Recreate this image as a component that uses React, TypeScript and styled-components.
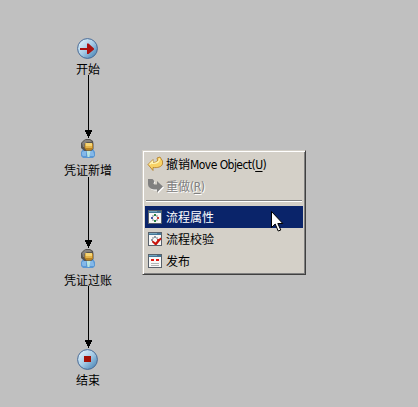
import React from "react";
import styled, { createGlobalStyle } from "styled-components";

const GlobalStyle = createGlobalStyle`
  html, body { margin: 0; background: #c0c0c0; overflow: hidden; }
`;

const Canvas = styled.main`
  position: relative;
  width: 418px;
  height: 407px;
  overflow: hidden;
  background: #c0c0c0;
  color: #000;
  font: 12px/16px "Noto Sans CJK SC", sans-serif;
  cursor: default;
`;

const Node = styled.div<{ $y: number }>`
  position: absolute;
  left: 48px;
  top: ${(p) => p.$y}px;
  width: 80px;
  display: flex;
  flex-direction: column;
  align-items: center;
  svg { display: block; }
`;

const NodeLabel = styled.span<{ $gap: number }>`
  height: 16px;
  margin-top: ${(p) => p.$gap}px;
  white-space: nowrap;
`;

const Edge = styled.svg<{ $y: number }>`
  position: absolute;
  left: 84px;
  top: ${(p) => p.$y}px;
`;

const Menu = styled.div`
  position: absolute;
  left: 142px;
  top: 150px;
  width: 164px;
  height: 125px;
  box-sizing: border-box;
  padding: 1px;
  border: 1px solid;
  border-color: #d4d0c8 #404040 #404040 #d4d0c8;
  background: #d4d0c8;
  box-shadow: inset 1px 1px #fff, inset -1px -1px #808080;
`;

const MenuItems = styled.div`
  padding: 1px;
`;

const Item = styled.div<{ $state?: "active" | "disabled" }>`
  display: flex;
  align-items: center;
  height: 22px;
  padding-left: 2px;
  white-space: nowrap;
  background: ${(p) => (p.$state === "active" ? "#0a246a" : "transparent")};
  color: ${(p) => (p.$state === "active" ? "#fff" : p.$state === "disabled" ? "#808080" : "#000")};
  text-shadow: ${(p) => (p.$state === "disabled" ? "1px 1px #fff" : "none")};
  svg { flex: none; margin-right: 3px; overflow: visible; }
`;

const Latin = styled.span`
  font-family: "DejaVu Sans Condensed", "DejaVu Sans", sans-serif;
  font-stretch: condensed;
  font-size: 12px;
  letter-spacing: -0.55px;
`;

const Key = styled.span`
  text-decoration: underline;
  text-underline-offset: 2px;
  text-decoration-thickness: 1px;
`;

const Separator = styled.div`
  height: 1px;
  margin: 3px 1px 4px;
  background: #808080;
  border-bottom: 1px solid #fff;
`;

const Pointer = styled.svg`
  position: absolute;
  left: 271px;
  top: 211px;
`;

const Disc = ({ stop }: { stop?: boolean }) => (
  <svg width="22" height="22" viewBox="0 0 22 22">
    <defs>
      <linearGradient id={stop ? "discStop" : "discStart"} x1="0" y1="0" x2="1" y2="1">
        <stop offset="0.15" stopColor="#d8edf8" />
        <stop offset="0.5" stopColor="#a6cbe6" />
        <stop offset="0.9" stopColor="#4e88b8" />
      </linearGradient>
    </defs>
    <circle cx="10.5" cy="10.5" r="9.9" fill={`url(#${stop ? "discStop" : "discStart"})`} stroke="#466895" />
    {stop ? (
      <path d="M7 7h7v6H7z" fill="#a41005" />
    ) : (
      <path d="M3 10h7V5.5h1.5l5.5 5v1l-5.5 4.5H10v-4H3z" fill="#ab1210" />
    )}
  </svg>
);

const User = () => (
  <svg width="16" height="20" viewBox="0 0 16 20">
    <path d="M3 10h10l2 3v4l-2 2H3l-2-2v-4z" fill="#5a97d3" />
    <path d="M2 13l2-1h2v5H3l-1-1zM10 12h3l1 3v2h-4z" fill="#83b8e9" />
    <path d="M6.5 11h4l-1 7h-2z" fill="#b9e4df" />
    <path d="M4 1l2-1h4l3 2 .5 3v5L11 12H4.500L1 9V4z" fill="#55524f" />
    <path d="M2 4l3-3h5l2 2H7L4.500 5v3H3z" fill="#85827f" />
    <path d="M5 4h7l1 1v4.500L11 11.500H6.500L4.500 9z" fill="#b98324" />
    <path d="M5.500 4h6.500v3H5.500z" fill="#f6d574" />
    <path d="M5.500 7h6.500v2H5.500z" fill="#e3b34b" />
  </svg>
);

const Arrow = ({ y, height }: { y: number; height: number }) => (
  <Edge $y={y} width="10" height={height} shapeRendering="crispEdges">
    <path d={`M4 0h1v${height - 7}h-1z M1 ${height - 8}h7v2h-1v2h-1v2h-1v2h-1v-2h-1v-2h-1v-2h-1z`} />
  </Edge>
);

const Undo = () => (
  <svg width="16" height="16" viewBox="0 0 16 16">
    <path d="M1 8.500l5-5v3c3 0 4.500-1 4.500-2.500L10 2l3-1 2.500 4v3c-1 3-5 4-9.500 3.500v3z" fill="#f8d266" stroke="#b07a24" strokeWidth=".8" />
    <path d="M2.500 8.500L5.500 5.500v2c4 0 7-1 7-5" fill="none" stroke="#fff6b8" strokeWidth="1.200" />
  </svg>
);

const Redo = () => (
  <svg width="16" height="16" viewBox="0 0 16 16">
    <path d="M2 2h5l1 2-1 2 1 1h3V4l6 5.500-6 6v-3C6 13 2 11 2 7z" fill="#fff" />
    <path d="M1 1h4.500L7.500 3l-1 2.500c.5 1 1.500 1 3.500 1V3L16 8.500 10 14.500v-3C5 12 1 10 1 6z" fill="#808080" />
  </svg>
);

const WindowIcon = ({ kind }: { kind: "props" | "check" | "publish" }) => (
  <svg width="16" height="16" viewBox="0 0 16 16" shapeRendering="crispEdges">
    <path d="M1 1h14v14H1z" fill="#59616b" />
    <path d="M2 4h12v10H2z" fill="#f8f8f7" />
    <path d="M2 2h12v2H2z" fill="#447798" />
    <path d="M2 2h8v1H2z" fill="#73a5bd" />
    {kind === "publish" ? (
      <>
        <path d="M4 6h3v2H4zM9 6h3v2H9z" fill="#e01812" />
        <path d="M4 10h8v1H4zM4 12h8v1H4z" fill="#b0b4b5" />
      </>
    ) : (
      <>
        <path d="M5 6h2v2H5zM9 6h2v2H9zM5 10h2v2H5zM9 10h2v2H9z" fill="#b8bdc1" />
        <path d="M7 5h2v2H7z" fill={kind === "props" ? "#298545" : "#909ba3"} />
        <path d="M4 8h2v2H4z" fill={kind === "props" ? "#4055a2" : "#909ba3"} />
        <path d="M10 8h2v2h-2z" fill="#cc3e36" />
        {kind === "props" && <path d="M7 11h2v2H7z" fill="#298545" />}
      </>
    )}
    {kind === "check" && (
      <path d="M5.500 9.500l3 2 5-5 1 1.500-5 6H8l-3-3z" fill="#c9140b" shapeRendering="auto" />
    )}
  </svg>
);

export default function App() {
  return (
    <Canvas>
      <GlobalStyle />
      <Arrow y={75} height={63} />
      <Arrow y={177} height={71} />
      <Arrow y={286} height={62} />
      <Node $y={38}><Disc /><NodeLabel $gap={1}>开始</NodeLabel></Node>
      <Node $y={139}><User /><NodeLabel $gap={3}>凭证新增</NodeLabel></Node>
      <Node $y={249}><User /><NodeLabel $gap={3}>凭证过账</NodeLabel></Node>
      <Node $y={349}><Disc stop /><NodeLabel $gap={1}>结束</NodeLabel></Node>
      <Menu role="menu">
        <MenuItems>
          <Item role="menuitem"><Undo /><span>撤销<Latin>Move Object(<Key>U</Key>)</Latin></span></Item>
          <Item role="menuitem" $state="disabled"><Redo /><span>重做<Latin>(<Key>R</Key>)</Latin></span></Item>
          <Separator />
          <Item role="menuitem" $state="active"><WindowIcon kind="props" /><span>流程属性</span></Item>
          <Item role="menuitem"><WindowIcon kind="check" /><span>流程校验</span></Item>
          <Item role="menuitem"><WindowIcon kind="publish" /><span>发布</span></Item>
        </MenuItems>
      </Menu>
      <Pointer width="13" height="22" viewBox="0 0 13 22">
        <path d="M.5.5v16l3.700-3.500 3 7 2.600-1-3-6.500h5z" fill="#fff" stroke="#000" />
      </Pointer>
    </Canvas>
  );
}
